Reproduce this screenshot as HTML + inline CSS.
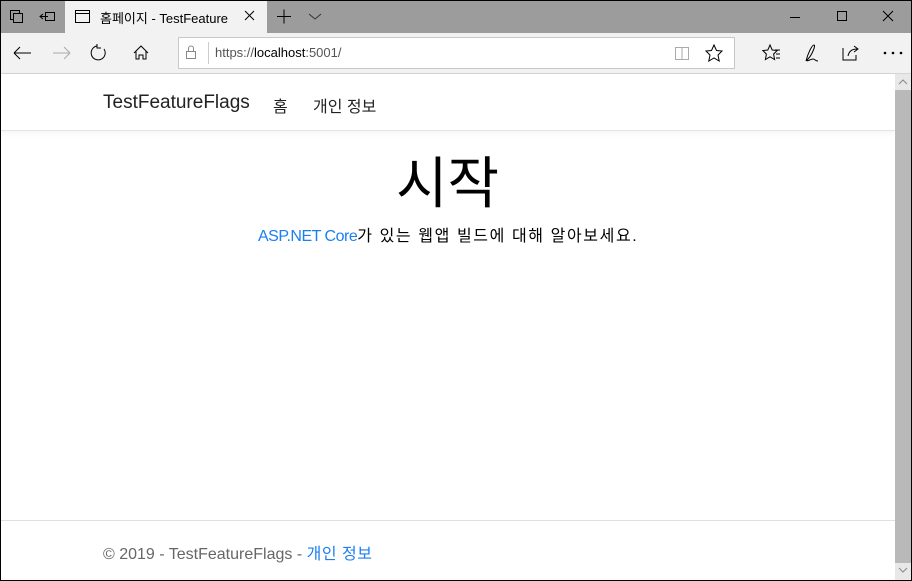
<!DOCTYPE html>
<html><head><meta charset="utf-8"><style>
*{margin:0;padding:0;box-sizing:border-box}
body{width:912px;height:581px;overflow:hidden;background:#fff;font-family:"Liberation Sans","Noto Sans CJK KR",sans-serif;position:relative}
.frame{position:absolute;left:0;top:0;width:912px;height:581px;border:1px solid #000;pointer-events:none;z-index:9}
.titlebar{position:absolute;left:0;top:0;width:912px;height:33px;background:#9c9c9c}
.tab{position:absolute;left:65px;top:0;width:202px;height:33px;background:#f2f2f2}
.toolbar{position:absolute;left:0;top:33px;width:912px;height:41px;background:#f2f2f2;border-bottom:1px solid #d5d5d5}
.addr{position:absolute;left:178px;top:37px;width:557px;height:32px;background:#fff;border:1px solid #c8c8c8}
svg{position:absolute}
.t{position:absolute;white-space:nowrap}
.nav{position:absolute;left:0;top:74px;width:895px;height:57px;border-bottom:1px solid #e5e5e5;box-shadow:0 2px 6px rgba(0,0,0,.05)}
.sb{position:absolute;left:895px;top:74px;width:16px;height:506px;background:#e8e8e8}
.thumb{position:absolute;left:895px;top:90px;width:16px;height:473px;background:#b9b9b9}
.foot{position:absolute;left:0;top:520px;width:895px;border-top:1px solid #e0e0e0}
</style></head><body>
<div class="titlebar"></div>
<div class="tab"></div>
<svg width="912" height="74" style="left:0;top:0" fill="none" stroke="#000" stroke-width="1">
<rect x="10.5" y="10.5" width="9" height="9"/><rect x="13.5" y="13.5" width="9" height="9" fill="#9c9c9c"/>
<rect x="45.5" y="12.5" width="9" height="8"/><path d="M40 16.5h8M43 14l-3 2.5 3 2.5"/>
<rect x="75.5" y="10.5" width="14" height="12"/><path d="M75.5 13.5h14"/>
<path d="M245 11l9 9M254 11l-9 9"/>
<path d="M277 16.5h14M284 9.5v14"/>
<path d="M309 14l6 5 6-5" stroke="#333"/>
<path d="M790 17.5h10"/><rect x="837.5" y="11.5" width="9" height="9"/><path d="M883 11l10 10M893 11l-10 10"/>
</svg>
<div class="t" style="left:100px;top:8px;font-size:13px;color:#000">홈페이지 - TestFeature</div>
<div class="toolbar"></div>
<div class="addr"></div>
<svg width="912" height="74" style="left:0;top:0" fill="none" stroke="#000" stroke-width="1">
<path d="M14 53h17M14 53l6-6M14 53l6 6"/>
<path d="M53 53h17M70 53l-6-6M70 53l-6 6" stroke="#aaa"/>
<path d="M97 46a7 7 0 1 0 7 3M97 44v4h4"/>
<path d="M134 53l7-7 7 7M136 51v8h3v-4h4v4h3v-8"/>
<rect x="186.5" y="51.5" width="9" height="7" stroke="#888"/><path d="M188.5 51.5v-3a2.5 2.5 0 0 1 5 0v3" stroke="#888"/>
<path d="M208.5 42v22" stroke="#ccc"/>
<rect x="675.5" y="47.5" width="13" height="12" stroke="#aaa"/><path d="M682 47.5v12" stroke="#aaa"/>
<path d="M714 45l2.5 5.5 5.5.5-4 4 1.2 6-5.2-3-5.2 3 1.2-6-4-4 5.5-.5z"/>
<path d="M770 45l2.2 5 5 .5-3.6 3.6 1 5.4-4.6-2.7-4.6 2.7 1-5.4-3.6-3.6 5-.5zM775 50h5M776 54h4M776 58h4"/>
<path d="M806 61c2-8 6-16 8-16s-2 10-6 14 3 0 5 0 2 2 5 2"/>
<path d="M843 48v12h13v-5M848 56c1-5 4-7 9-7M854 46l4 3-4 3"/>
<circle cx="885" cy="53" r=".8" fill="#000"/><circle cx="893" cy="53" r=".8" fill="#000"/><circle cx="901" cy="53" r=".8" fill="#000"/>
</svg>
<div class="t" style="left:215px;top:45px;font-size:13px;color:#555">https://<span style="color:#000">localhost</span>:5001/</div>
<div class="nav"></div>
<div class="t" style="left:103px;top:92px;font-size:19px;color:#222">TestFeatureFlags</div>
<div class="t" style="left:273px;top:93px;font-size:16px;color:#222">홈</div>
<div class="t" style="left:313px;top:93px;font-size:16px;color:#222">개인 정보</div>
<div class="t" style="left:0;width:895px;text-align:center;top:149px;font-size:56px;line-height:70px;color:#000">시작</div>
<div class="t" style="left:258px;top:222px;font-size:16px;color:#000"><span style="color:#1b7ff0;letter-spacing:-0.5px">ASP.NET Core</span><span style="letter-spacing:1.6px">가 있는 웹앱 빌드에 대해 알아보세요.</span></div>
<div class="foot"></div>
<div class="t" style="left:103px;top:540px;font-size:16px;color:#666">© 2019 - TestFeatureFlags - <span style="color:#1b7ff0;letter-spacing:0.5px">개인 정보</span></div>
<div class="sb"></div><div class="thumb"></div>
<svg width="16" height="506" style="left:895px;top:74px" fill="none" stroke="#888"><path d="M4 10l4-4 4 4M4 494l4 4 4-4"/></svg>
<div class="frame"></div>
</body></html>
